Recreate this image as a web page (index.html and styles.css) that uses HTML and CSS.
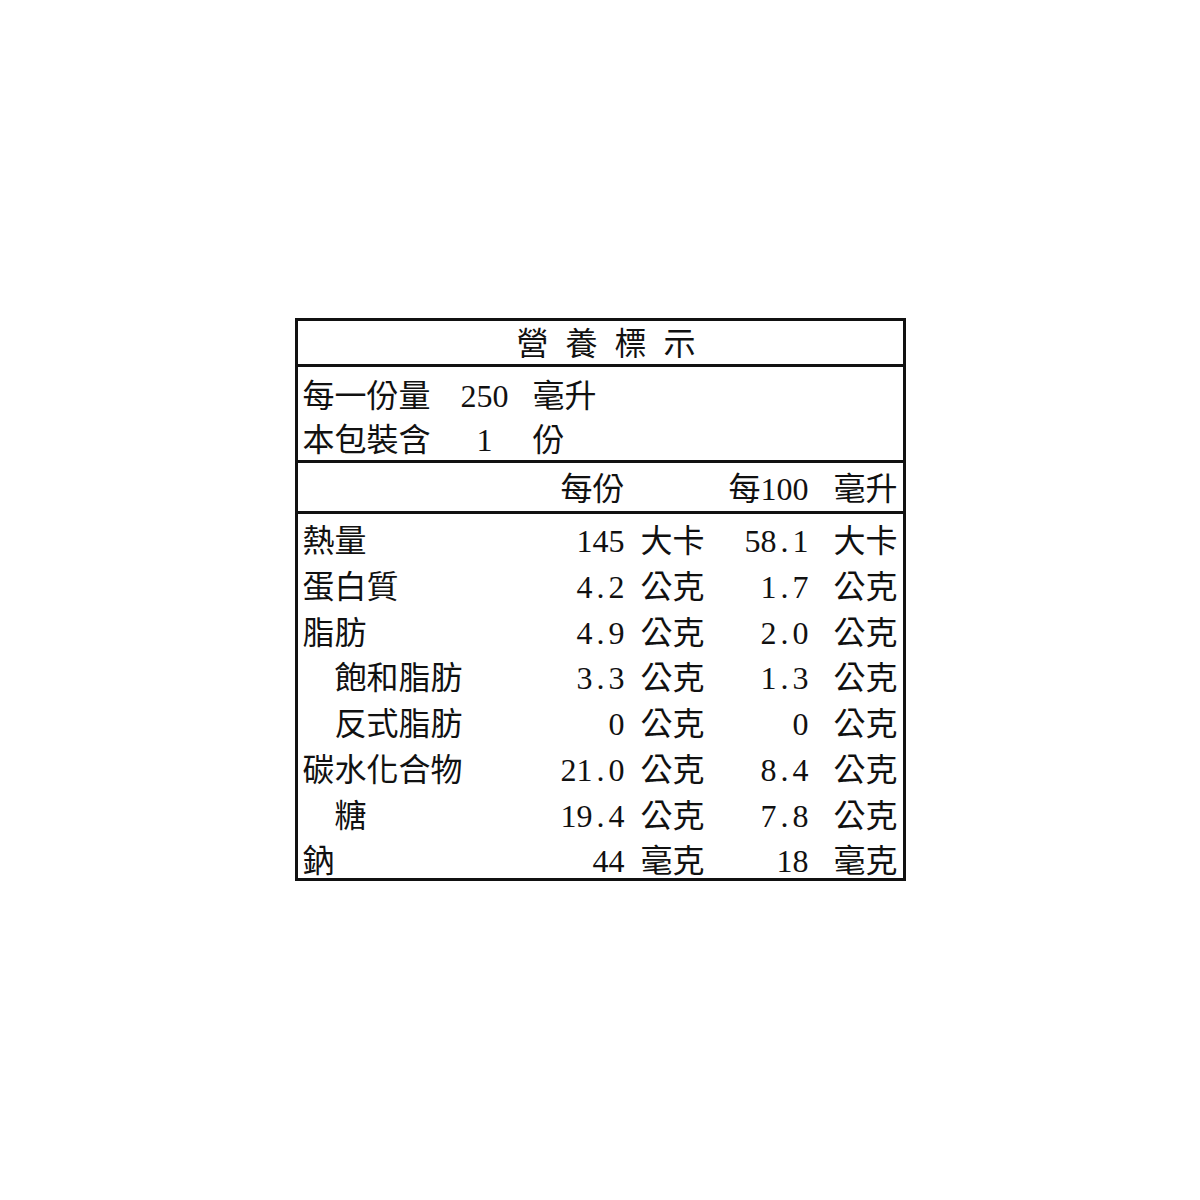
FILE: index.html
```html
<!DOCTYPE html>
<html lang="zh-Hant">
<head>
<meta charset="utf-8">
<title>營養標示</title>
<link rel="stylesheet" href="styles.css">
</head>
<body>
<div class="label">
  <div class="title">營養標示</div>
  <div class="serving">
    <div class="sline"><span class="sname">每一份量</span><span class="sval">250</span><span class="sunit">毫升</span></div>
    <div class="sline"><span class="sname">本包裝含</span><span class="sval">1</span><span class="sunit">份</span></div>
  </div>
  <div class="grid head">
    <span></span>
    <span class="val">每份</span>
    <span class="unit1"></span>
    <span class="val">每100</span>
    <span class="unit2">毫升</span>
  </div>
  <div class="data">
    <div class="grid row"><span>熱量</span><span class="val">145</span><span class="unit1">大卡</span><span class="val">58<span class="dot">.</span>1</span><span class="unit2">大卡</span></div>
    <div class="grid row"><span>蛋白質</span><span class="val">4<span class="dot">.</span>2</span><span class="unit1">公克</span><span class="val">1<span class="dot">.</span>7</span><span class="unit2">公克</span></div>
    <div class="grid row"><span>脂肪</span><span class="val">4<span class="dot">.</span>9</span><span class="unit1">公克</span><span class="val">2<span class="dot">.</span>0</span><span class="unit2">公克</span></div>
    <div class="grid row"><span class="indent">飽和脂肪</span><span class="val">3<span class="dot">.</span>3</span><span class="unit1">公克</span><span class="val">1<span class="dot">.</span>3</span><span class="unit2">公克</span></div>
    <div class="grid row"><span class="indent">反式脂肪</span><span class="val">0</span><span class="unit1">公克</span><span class="val">0</span><span class="unit2">公克</span></div>
    <div class="grid row"><span>碳水化合物</span><span class="val">21<span class="dot">.</span>0</span><span class="unit1">公克</span><span class="val">8<span class="dot">.</span>4</span><span class="unit2">公克</span></div>
    <div class="grid row"><span class="indent">糖</span><span class="val">19<span class="dot">.</span>4</span><span class="unit1">公克</span><span class="val">7<span class="dot">.</span>8</span><span class="unit2">公克</span></div>
    <div class="grid row"><span>鈉</span><span class="val">44</span><span class="unit1">毫克</span><span class="val">18</span><span class="unit2">毫克</span></div>
  </div>
</div>
</body>
</html>
```

FILE: styles.css
```css
html, body {
  margin: 0;
  padding: 0;
  background: #ffffff;
}

body {
  padding-top: 318px;
  font-family: "Liberation Serif", "Noto Sans CJK TC", serif;
  font-size: 32px;
  color: #111111;
}

.label {
  width: 611px;
  box-sizing: border-box;
  margin: 0 auto;
  border: 3px solid #111111;
}

.title {
  height: 41px;
  padding-top: 2px;
  line-height: 43px;
  text-align: center;
  letter-spacing: 17px;
  padding-left: 29px;
  border-bottom: 3px solid #111111;
}

.serving {
  height: 96px;
  box-sizing: border-box;
  padding: 7px 5px 0 5px;
  border-bottom: 3px solid #111111;
}

.sline {
  display: flex;
  height: 44px;
  line-height: 44px;
}

.sname {
  width: 128px;
}

.sval {
  width: 48px;
  margin-left: 30px;
  text-align: center;
}

.sunit {
  margin-left: 24px;
}

.grid {
  display: grid;
  grid-template-columns: 200px 122px 96px 88px 89px;
  padding: 0 5px;
  white-space: nowrap;
}

.head {
  height: 51px;
  box-sizing: border-box;
  padding-top: 4px;
  line-height: 44px;
  border-bottom: 3px solid #111111;
}

.data {
  height: 364px;
  box-sizing: border-box;
  padding-top: 5px;
}

.row {
  height: 45.75px;
  line-height: 45.75px;
}

.val {
  text-align: right;
}

.unit1 {
  padding-left: 16px;
}

.unit2 {
  padding-left: 25px;
}

.indent {
  padding-left: 32px;
}

.dot {
  display: inline-block;
  width: 16px;
  text-align: center;
}
```
